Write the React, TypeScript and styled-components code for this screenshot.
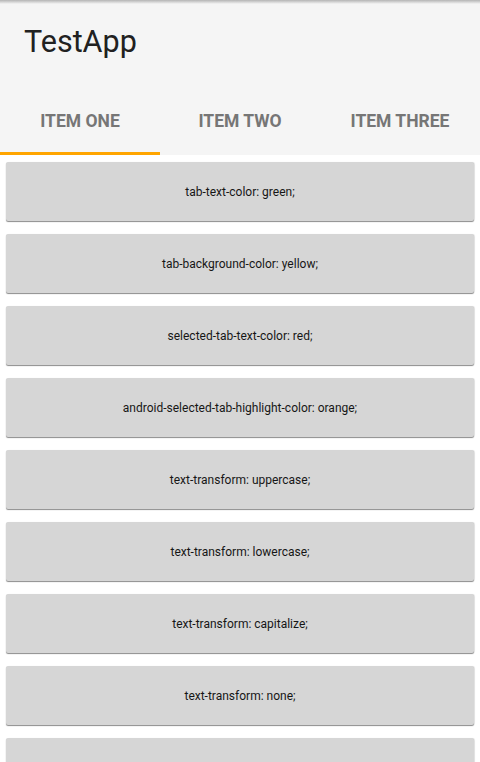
import React from "react";
import styled, { createGlobalStyle } from "styled-components";

const Global = createGlobalStyle`
  html, body { margin: 0; padding: 0; background: #ffffff; }
  body { font-family: Roboto, "Noto Sans", sans-serif; overflow: hidden; }
`;

const Page = styled.div`
  width: 480px;
  height: 762px;
  overflow: hidden;
  background: #ffffff;
  display: flex;
  flex-direction: column;
`;

const Header = styled.header`
  background: #f5f5f5;
  position: relative;
  display: flex;
  flex-direction: column;
  &::before {
    content: "";
    position: absolute;
    left: 0;
    right: 0;
    top: 0;
    height: 4px;
    background: linear-gradient(#b4b4b4, rgba(245, 245, 245, 0));
  }
`;

const Title = styled.h1`
  margin: 0;
  height: 86px;
  box-sizing: border-box;
  padding: 0 24px 3px 24px;
  display: flex;
  align-items: center;
  font-family: Roboto, sans-serif;
  font-weight: 400;
  font-size: 30.5px;
  color: #212121;
`;

const TabBar = styled.nav`
  display: grid;
  grid-template-columns: repeat(3, 1fr);
  height: 69px;
`;

const Tab = styled.div<{ $active?: boolean }>`
  display: flex;
  align-items: center;
  justify-content: center;
  padding-top: 3px;
  font-family: Roboto, sans-serif;
  font-weight: 700;
  font-size: 17.5px;
  color: #767676;
  box-sizing: border-box;
  border-bottom: 3px solid ${(p) => (p.$active ? "#ffa500" : "transparent")};
`;

const List = styled.div`
  display: flex;
  flex-direction: column;
  gap: 13px;
  padding: 7px 6px 0 6px;
`;

const Item = styled.button`
  height: 59px;
  flex-shrink: 0;
  border: none;
  border-radius: 2px;
  background: #d6d6d6;
  box-shadow: 0 1px 1px rgba(0, 0, 0, 0.45), 1px 0 1px rgba(0, 0, 0, 0.08);
  font-family: Roboto, sans-serif;
  font-size: 12px;
  color: #161616;
  display: flex;
  align-items: center;
  justify-content: center;
  padding: 0;
`;

const tabs = ["ITEM ONE", "ITEM TWO", "ITEM THREE"];
const items = [
  "tab-text-color: green;",
  "tab-background-color: yellow;",
  "selected-tab-text-color: red;",
  "android-selected-tab-highlight-color: orange;",
  "text-transform: uppercase;",
  "text-transform: lowercase;",
  "text-transform: capitalize;",
  "text-transform: none;",
  "",
];

export default function App() {
  return (
    <Page>
      <Global />
      <Header>
        <Title>TestApp</Title>
        <TabBar>
          {tabs.map((t, i) => (
            <Tab key={t} $active={i === 0}>
              {t}
            </Tab>
          ))}
        </TabBar>
      </Header>
      <List>
        {items.map((t, i) => (
          <Item key={i}>{t}</Item>
        ))}
      </List>
    </Page>
  );
}
